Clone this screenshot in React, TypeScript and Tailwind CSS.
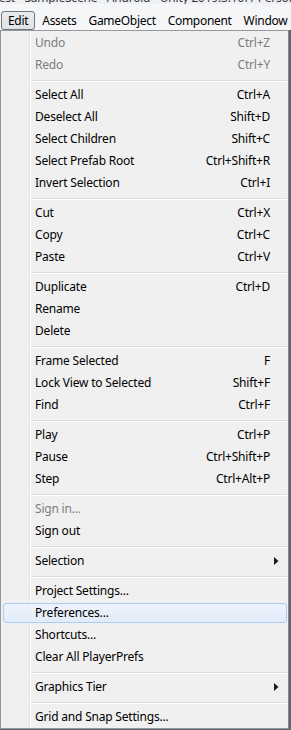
import React from "react";

type Item =
  | { sep: true }
  | {
      sep?: false;
      label: string;
      shortcut?: string;
      disabled?: boolean;
      arrow?: boolean;
      active?: boolean;
    };

const items: Item[] = [
  { label: "Undo", shortcut: "Ctrl+Z", disabled: true },
  { label: "Redo", shortcut: "Ctrl+Y", disabled: true },
  { sep: true },
  { label: "Select All", shortcut: "Ctrl+A" },
  { label: "Deselect All", shortcut: "Shift+D" },
  { label: "Select Children", shortcut: "Shift+C" },
  { label: "Select Prefab Root", shortcut: "Ctrl+Shift+R" },
  { label: "Invert Selection", shortcut: "Ctrl+I" },
  { sep: true },
  { label: "Cut", shortcut: "Ctrl+X" },
  { label: "Copy", shortcut: "Ctrl+C" },
  { label: "Paste", shortcut: "Ctrl+V" },
  { sep: true },
  { label: "Duplicate", shortcut: "Ctrl+D" },
  { label: "Rename" },
  { label: "Delete" },
  { sep: true },
  { label: "Frame Selected", shortcut: "F" },
  { label: "Lock View to Selected", shortcut: "Shift+F" },
  { label: "Find", shortcut: "Ctrl+F" },
  { sep: true },
  { label: "Play", shortcut: "Ctrl+P" },
  { label: "Pause", shortcut: "Ctrl+Shift+P" },
  { label: "Step", shortcut: "Ctrl+Alt+P" },
  { sep: true },
  { label: "Sign in...", disabled: true },
  { label: "Sign out" },
  { sep: true },
  { label: "Selection", arrow: true },
  { sep: true },
  { label: "Project Settings..." },
  { label: "Preferences...", active: true },
  { label: "Shortcuts..." },
  { label: "Clear All PlayerPrefs" },
  { sep: true },
  { label: "Graphics Tier", arrow: true },
  { sep: true },
  { label: "Grid and Snap Settings..." },
];

const menubar = ["Edit", "Assets", "GameObject", "Component", "Window"];

function Arrow() {
  return (
    <svg width="5" height="8" viewBox="0 0 5 8" className="block">
      <path d="M0 0 L4.5 4 L0 8 Z" fill="#1a1a1a" />
    </svg>
  );
}

export default function App() {
  return (
    <div className="w-[291px] h-[730px] overflow-hidden bg-[#5b6470] font-['Noto_Sans',sans-serif] text-[12px] tracking-[-0.2px] text-black">
      {/* title strip */}
      <div className="h-[4px] overflow-hidden bg-[#eef0f3]">
        <div className="-mt-[8px] leading-[12px] whitespace-nowrap text-[#3c3c3c] -ml-[7px]">
          Test - SampleScene - Android - Unity 2019.3.10f1 Personal
        </div>
      </div>
      {/* menu bar */}
      <div className="h-[26px] bg-[#f5f6f8] flex items-end whitespace-nowrap tracking-[-0.3px]">
        {menubar.map((m, i) => (
          <div key={m} className="h-[19px] flex items-stretch">
            {i === 0 ? (
              <div className="mx-[1px] px-[6px] flex items-center border border-[#6c7480] rounded-[3px] bg-[linear-gradient(#e9ebee,#dfe2e6)] leading-[17px]">
                {m}
              </div>
            ) : (
              <div className="px-[6px] flex items-center leading-[17px]">{m}</div>
            )}
          </div>
        ))}
      </div>
      {/* dropdown */}
      <div className="w-[289px] border border-[#979797] border-r-[#8a8a8a] bg-[#f0f0f0] pt-[1px] pl-[2px] pr-[1px] bg-[linear-gradient(to_right,transparent_28px,#e2e3e3_28px,#e2e3e3_29px,#ffffff_29px,#ffffff_30px,transparent_30px)]">
        {items.map((it, i) =>
          it.sep ? (
            <div key={i} className="h-[8px] pt-[4px] pl-[28px]">
              <div className="h-[1px] bg-[#dadbdb]" />
              <div className="h-[1px] bg-white" />
            </div>
          ) : (
            <div key={i} className="h-[22px] relative">
              {it.active && (
                <div className="absolute left-0 right-0 top-[1px] bottom-[1px] rounded-[3px] border border-[#a9cdf5] bg-[linear-gradient(#eef4fc,#e1ebf9)]" />
              )}
              <div
                className={
                  "relative h-[22px] flex items-center pl-[32px] pr-[17px] leading-[20px] pb-[1px] " +
                  (it.disabled ? "text-[#7d7d7d]" : "text-black")
                }
              >
                <span className="flex-1 whitespace-nowrap">{it.label}</span>
                {it.shortcut && <span className="whitespace-nowrap">{it.shortcut}</span>}
                {it.arrow && (
                  <span className="absolute left-[271px] top-[7px]">
                    <Arrow />
                  </span>
                )}
              </div>
            </div>
          )
        )}
      </div>
    </div>
  );
}
